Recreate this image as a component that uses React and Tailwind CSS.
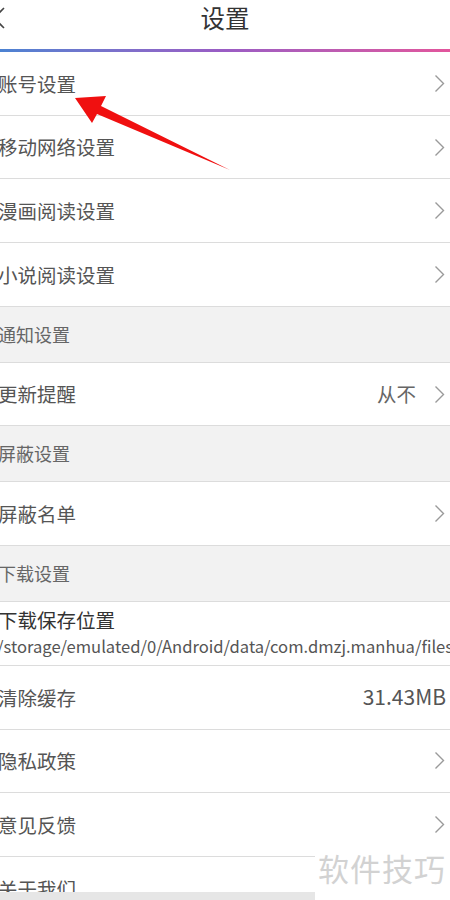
import React from "react";

const Chevron = () => (
    <svg width="11" height="19" viewBox="0 0 11 19" className="shrink-0">
        <path d="M1.5 1.5 L9.5 9.5 L1.5 17.5" fill="none" stroke="#9a9a9a" strokeWidth="1.4" />
    </svg>
);

const Row = ({ label, value, arrow = true }) => (
    <div className="h-[62.7px] box-content border-b border-[#dcdcdc] bg-white flex items-center justify-between pr-[5px]">
        <span className="-ml-[2px] text-[19.5px] text-[#555]">{label}</span>
        <div className="flex items-center gap-[18px]">
            {value && <span className="text-[19.5px] text-[#666]">{value}</span>}
            {arrow && <Chevron />}
        </div>
    </div>
);

const Section = ({ label }) => (
    <div className="h-[55px] box-content border-b border-[#dcdcdc] bg-[#f2f2f2] flex items-center">
        <span className="-ml-[2px] text-[18px] text-[#666]">{label}</span>
    </div>
);

export default function App() {
    return (
        <div
            className="relative w-[450px] h-[900px] overflow-hidden bg-white"
            style={{ fontFamily: '"Noto Sans CJK SC", "Noto Sans", sans-serif' }}
        >
            {/* Header */}
            <div className="h-[49px] flex items-center justify-center relative">
                <svg width="14" height="24" viewBox="0 0 14 24" className="absolute -left-[8px] top-[6px]">
                    <path d="M12 2 L2 12 L12 22" fill="none" stroke="#444" strokeWidth="1.6" />
                </svg>
                <span className="text-[24.5px] text-[#333] -mt-[12px]">设置</span>
            </div>
            <div className="h-[3px] bg-gradient-to-r from-[#4a82d2] via-[#9a5cc4] to-[#e2559c]" />

            <Row label="账号设置" />
            <Row label="移动网络设置" />
            <Row label="漫画阅读设置" />
            <Row label="小说阅读设置" />
            <Section label="通知设置" />
            <Row label="更新提醒" value="从不" />
            <Section label="屏蔽设置" />
            <Row label="屏蔽名单" />
            <Section label="下载设置" />
            <div className="h-[62.7px] box-content border-b border-[#dcdcdc] bg-white flex flex-col justify-center whitespace-nowrap">
                <span className="-ml-[2px] text-[19.5px] leading-[26px] text-[#333]">下载保存位置</span>
                <span className="-ml-[3px] text-[16.6px] leading-[26px] text-[#555]">
                    /storage/emulated/0/Android/data/com.dmzj.manhua/files
                </span>
            </div>
            <div className="h-[62.7px] box-content border-b border-[#dcdcdc] bg-white flex items-center justify-between pr-[4px]">
                <span className="-ml-[2px] text-[19.5px] text-[#555]">清除缓存</span>
                <span className="text-[21px] text-[#555]">31.43MB</span>
            </div>
            <Row label="隐私政策" />
            <Row label="意见反馈" />
            <Row label="关于我们" arrow={false} />

            {/* red annotation arrow */}
            <svg className="absolute left-0 top-0" width="450" height="200" viewBox="0 0 450 200">
                <polygon
                    points="75,98 106,96 101,106 230,170 97,114 92,123"
                    fill="#f01010"
                />
            </svg>

            {/* watermark overlay */}
            <div className="absolute right-0 bottom-0 w-[135px] h-[52px] bg-white flex items-start justify-end pr-[4px]">
                <span className="text-[31px] leading-[40px] text-[#d2d2d2] tracking-[1px]">软件技巧</span>
            </div>
            <div className="absolute left-0 bottom-0 w-[315px] h-[8px] bg-[#e6e6e6]" />
        </div>
    );
}
